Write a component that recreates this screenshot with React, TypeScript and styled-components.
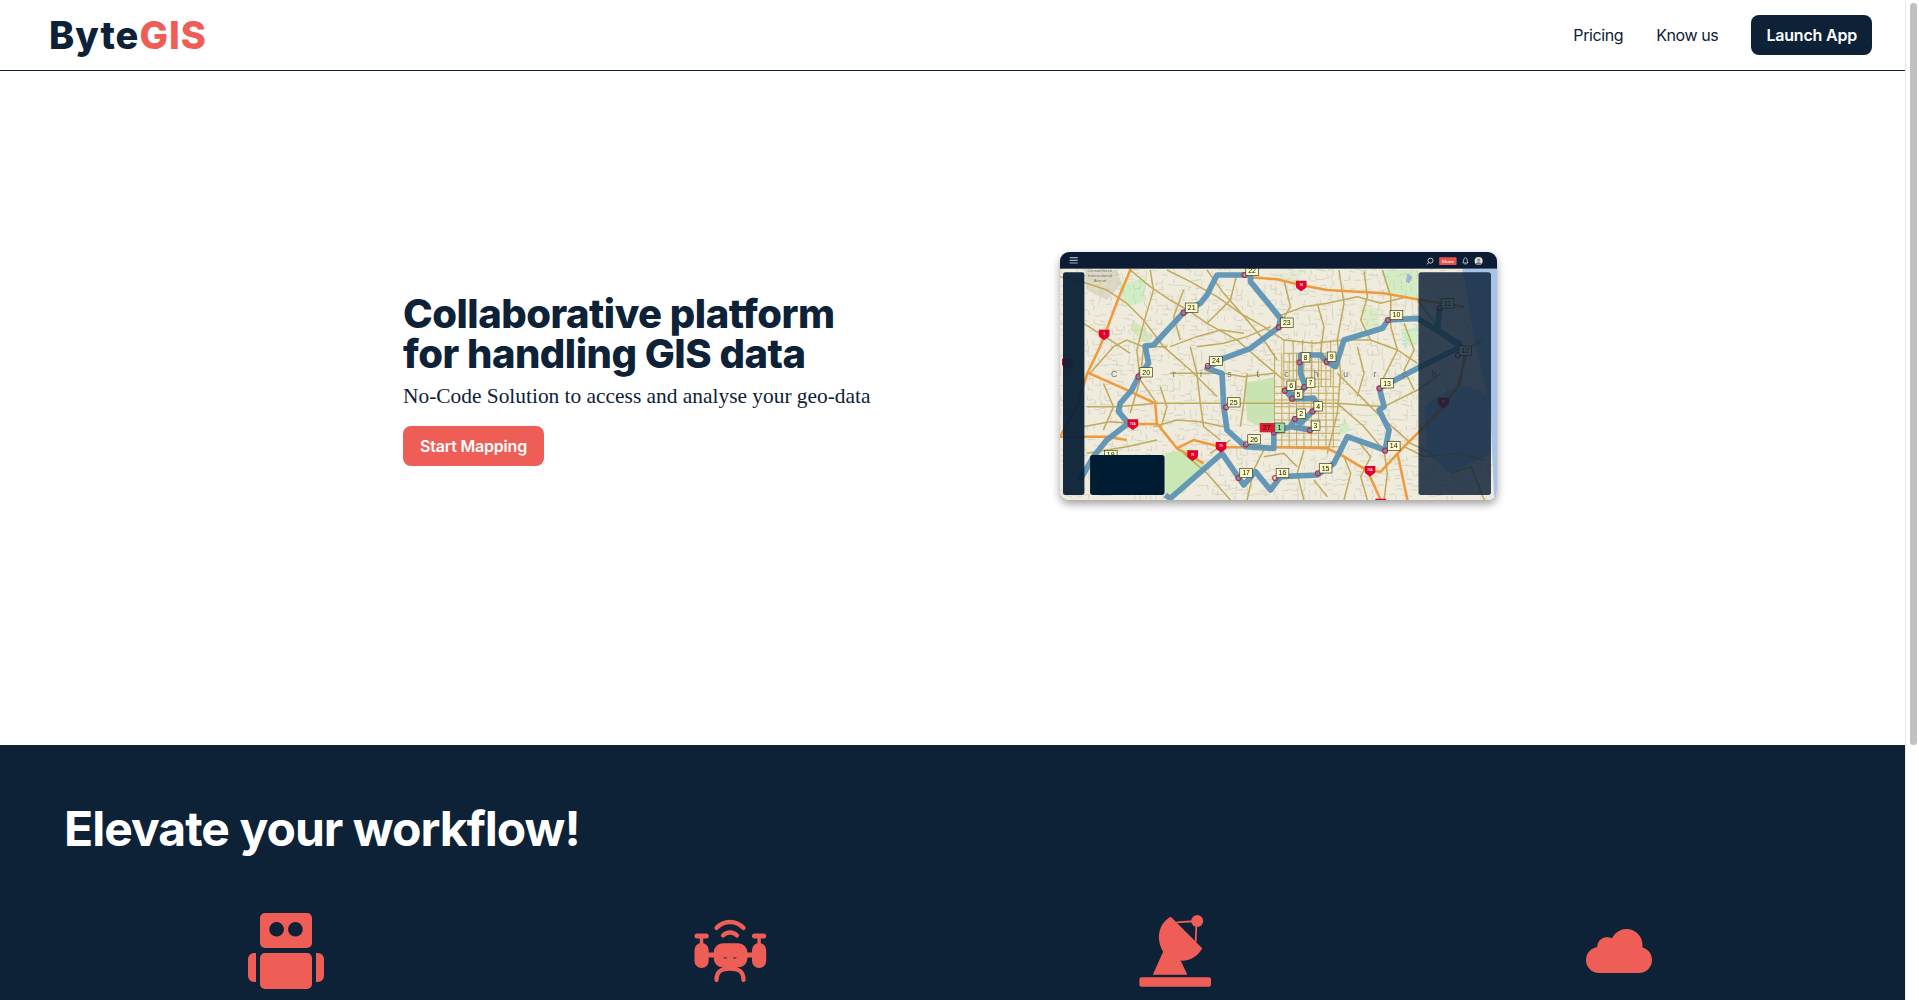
import React from "react";
import styled, { createGlobalStyle } from "styled-components";

const NAVY = "#0d2137";
const CORAL = "#ee5e57";
const SANS = `Inter, "Liberation Sans", Arial, sans-serif`;
const SERIF = `"Liberation Serif", "Times New Roman", serif`;

const Global = createGlobalStyle`
  body { margin: 0; background: #fff; font-family: ${SANS}; color: ${NAVY}; }
`;

const Frame = styled.div`display: flex; align-items: flex-start;`;
const Page = styled.main`flex: 1; min-width: 0;`;
const Rail = styled.aside`
  position: sticky; top: 0; flex: none; width: 14px; height: 100vh; box-sizing: border-box;
  padding: 3px 2px 0 4px; background: #fff; border-left: 1px solid #e8e8e8;
`;
const Thumb = styled.div`height: 742px; border-radius: 4px; background: #c1c1c1;`;
const Nav = styled.header`
  display: flex; align-items: center; justify-content: space-between;
  height: 70px; padding: 0 33px 0 50px; border-bottom: 1px solid ${NAVY}; box-sizing: content-box;
`;
const Logo = styled.div`
  font-size: 38px; font-weight: 800; letter-spacing: 1px; line-height: 70px; margin-left: -1px;
  span { color: ${CORAL}; }
`;
const NavLinks = styled.nav`display: flex; align-items: center; gap: 33px;`;
const NavLink = styled.a`font-size: 16px; font-weight: 400; color: ${NAVY}; letter-spacing: -0.4px; margin-top: -1px;`;
const Button = styled.button<{ $bg: string; $pad: number }>`
  height: 40px; border: 0; border-radius: 8px; padding: 0 ${p => p.$pad}px;
  background: ${p => p.$bg}; color: #fff; font-family: ${SANS}; font-size: 16px; font-weight: 600; letter-spacing: -0.2px;
`;
const Hero = styled.section`
  display: flex; align-items: center; justify-content: center; gap: 189px;
  height: 674px; padding: 0 5px 64px 0; box-sizing: border-box;
`;
const HeroText = styled.div`display: flex; flex-direction: column; align-items: flex-start; width: 468px; margin-top: 8px;`;
const Title = styled.h1`margin: 0; font-size: 40px; line-height: 40px; font-weight: 800; letter-spacing: -0.5px; white-space: nowrap;`;
const Sub = styled.p`margin: 8px 0 16px; font-family: ${SERIF}; font-size: 21.4px; line-height: 28px; white-space: nowrap;`;
const Shot = styled.div`
  width: 437px; height: 248px; border-radius: 9px; overflow: hidden; flex: none;
  box-shadow: 0 4px 9px rgba(0,0,0,.38);
  svg { display: block; width: 100%; height: 100%; }
`;
const Dark = styled.section`
  background: ${NAVY}; color: #fff; padding: 54px 64px 0; min-height: 602px; box-sizing: border-box;
`;
const DarkTitle = styled.h2`margin: 0 0 52px; font-size: 48px; line-height: 60px; font-weight: 700; letter-spacing: -0.97px;`;
const Features = styled.div`display: grid; grid-template-columns: repeat(4, 1fr);`;
const Feature = styled.div`display: flex; justify-content: center;`;
const Icon = styled.svg`width: 80px; height: 80px; fill: ${CORAL}; display: block;`;

const tan: string[] = [
  "240,90 300,140 360,180 420,215 470,250 560,300 640,370 700,420",
  "350,90 420,125 500,170 570,220 640,260 700,300",
  "30,110 110,130 170,150 230,190 280,240 340,320 420,390 500,470",
  "300,90 310,150 280,250 260,330 270,420 240,520",
  "470,90 520,160 590,240 640,300 680,360",
  "865,90 880,190 860,300 870,400 860,520 830,640",
  "995,90 1020,170 1020,260 1040,330 990,430",
  "800,190 820,260 810,340",
  "680,230 760,200 830,190 920,170 990,190 1070,170",
  "700,300 790,310 880,300 960,300 1040,330 1100,370",
  "440,320 520,310 590,290 660,260",
  "360,320 440,290 510,270 580,280",
  "120,400 190,320 230,300 280,320 350,320",
  "280,320 270,420 320,490",
  "110,500 200,500 320,490 460,490 580,490 670,490 860,490 1000,500",
  "100,560 180,545 240,550",
  "420,320 440,400 450,490 460,560 510,600",
  "590,400 580,490 570,560",
  "310,560 380,540 450,545 520,560",
  "860,400 980,520 1080,610 1140,640",
  "860,490 940,560 990,620",
  "1000,500 1100,450 1170,400",
  "670,400 580,410 520,400 440,400 360,400",
  "880,650 900,700 880,780",
  "640,630 610,690 590,780",
  "760,630 740,700 760,780",
  "1060,620 1120,650 1220,640 1300,660",
  "1000,630 1010,700 1000,780",
  "400,640 470,700 540,780",
  "1100,180 1160,260 1240,330 1230,430 1180,490 1120,560",
  "1240,330 1300,300",
  "100,250 180,300 240,340",
  "110,640 230,620 320,600",
  "1200,700 1260,680 1300,780",
  "400,150 370,230 390,300",
  "560,100 540,180 470,250",
  "700,120 720,200 690,250",
  "940,95 950,170 930,240 960,300",
  "1060,250 1090,330 1060,390 1090,450",
  "920,320 940,400 920,470",
  "330,440 350,500 330,570",
  "160,430 190,500 160,570",
  "640,650 700,640 740,680",
  "920,600 960,650 930,710 950,780",
  "790,720 830,770",
  "480,640 540,600",
];
const orange: string[] = [
  "242,86 205,175 150,320 112,400 80,500 30,590",
  "112,398 220,445 315,490 320,550 380,625 460,670",
  "240,552 320,552",
  "30,590 170,590 230,600",
  "380,625 430,600 515,622 680,622 830,625 880,650 950,692 990,695 1060,620 1160,520 1220,440 1250,330",
  "600,112 680,118 750,135 830,150 1000,160 1110,180 1240,200",
  "1040,640 1070,780",
  "950,692 990,780",
];

function streets(): string {
  let d = "";
  let s = 17;
  const r = () => ((s = (s * 9301 + 49297) % 233280) / 233280);
  for (let y = 90; y < 780; y += 15) {
    for (let x = 30; x < 1320; x += 17) {
      const inPark = x > 585 && x < 668 && y > 420 && y < 555;
      const green = x > 350 && x < 430 && y > 640;
      if (inPark || green || r() < 0.38) continue;
      const jx = r() * 7 - 3.5, jy = r() * 7 - 3.5, tilt = r() * 8 - 4;
      if (r() < 0.55) d += `M${x + jx} ${y + jy}l17 ${tilt}`;
      else d += `M${x + jx} ${y + jy}l${tilt} 15`;
    }
  }
  return d;
}
function cbd(): string {
  let d = "";
  for (let x = 672; x <= 868; x += 22) d += `M${x} 340V625`;
  for (let y = 440; y <= 620; y += 20) d += `M672 ${y}H868`;
  for (let x = 700; x <= 840; x += 28) d += `M${x} 300V440`;
  for (let y = 340; y <= 440; y += 26) d += `M700 ${y}H840`;
  return d;
}

const routes = [
  "582,105 500,105 470,165 450,190 400,218 310,315 285,318 295,370 265,410 245,450 210,490 205,515 235,550 170,600 130,650 90,720",
  "345,765 360,775 515,640 580,735 615,695 660,750 690,710 800,705 850,670 890,590 1003,630 1015,570 985,510 1000,500 986,445 1100,385 1230,320 1160,270 1165,205",
  "1230,315 1100,235 1012,240 995,265 880,300 855,380 828,365 810,345 750,345 750,400 765,440 735,470 705,450 725,476 790,475 805,500 786,514 750,550 733,537 720,560 780,570 720,560 670,575 670,625 585,620 530,570 520,500 515,400 470,385 520,355 600,325 685,262 690,235 600,125 600,105 582,105",
];
const markers: [string, number, number, number, number][] = [
  ["22", 582, 105, 605, 93], ["21", 400, 218, 424, 203], ["23", 685, 262, 709, 248], ["10", 1012, 240, 1037, 225],
  ["11", 1167, 205, 1190, 190], ["12", 1221, 346, 1243, 332], ["9", 828, 365, 843, 350], ["8", 747, 367, 765, 352],
  ["24", 473, 378, 497, 363], ["20", 265, 410, 288, 397], ["13", 986, 445, 1009, 430], ["7", 761, 441, 780, 428],
  ["6", 703, 452, 722, 437], ["5", 725, 476, 744, 463], ["25", 527, 502, 550, 487], ["4", 786, 514, 803, 499],
  ["2", 733, 537, 752, 521], ["3", 778, 571, 795, 557], ["26", 587, 613, 611, 598], ["14", 1003, 632, 1029, 618],
  ["15", 802, 700, 825, 685], ["16", 674, 714, 696, 699], ["17", 564, 714, 587, 699], ["19", 160, 660, 182, 645],
];
const shields: [string, number, number][] = [
  ["1", 162, 283], ["74", 752, 136], ["75", 52, 370], ["75A", 248, 552], ["73", 512, 620], ["75", 427, 645],
  ["75A", 958, 692], ["75", 1178, 487], ["", 990, 790],
];
const cityLetters: [string, number][] = [
  ["C", 192], ["r", 372], ["i", 452], ["s", 537], ["t", 622], ["c", 708], ["h", 797], ["u", 885], ["r", 973], ["c", 1060], ["h", 1150],
];

const MapShot = () => (
  <svg viewBox="30 36 1308 744" preserveAspectRatio="none">
    <defs>
      <filter id="soft" x="-2%" y="-2%" width="104%" height="104%"><feGaussianBlur stdDeviation="1.5" /></filter>
    </defs>
    <g filter="url(#soft)">
      <rect x="20" y="30" width="1330" height="760" fill="#efebdd" />
      <path d="M205 135L285 115 280 185 230 200Z" fill="#cfeec5" />
      <path d="M995 90H1100V175L1010 155Z" fill="#d3ecc4" />
      <path d="M1050 270L1100 260 1100 310 1060 325Z" fill="#cff0cd" />
      <path d="M925 200L985 205 985 265 945 270Z" fill="#dcebc8" />
      <path d="M690 100L760 90 740 130 700 125Z" fill="#e2ecd0" />
      <path d="M250 240L310 290 290 310 240 270Z" fill="#d6e5bb" />
      <path d="M880 530L900 570 860 590Z" fill="#d3ecc4" />
      <path d="M1070 100L1085 110 1075 130 1065 125Z" fill="#8fb4e4" />
      <path d="M105 90H200L215 130 170 180 110 150Z" fill="#dcd8c8" />
      <path d="M120 140L160 120M130 150L170 130" stroke="#ece5a0" strokeWidth="5" />
      <path d={streets()} fill="none" stroke="#c6c2ae" strokeWidth="1.6" />
      <polygon points="1235,86 1345,86 1345,790 1330,790 1320,560 1310,470 1270,300" fill="#a6c4ea" />
      <path d="M1120 500C1180 440 1260 420 1310 470L1320 640 1200 700 1130 640Z" fill="#a8c4e8" />
      <path d="M582 430L670 412 672 540 630 562 590 540Z" fill="#c9e3b2" />
      <path d="M345 640L425 625 460 680 400 760 345 760Z" fill="#c9e8b4" />
      <path d={cbd()} fill="none" stroke="#c4ab5c" strokeWidth="3" />
      {tan.map((p, i) => <polyline key={i} points={p} fill="none" stroke="#c2aa5c" strokeWidth="4.5" />)}
      {orange.map((p, i) => <polyline key={i} points={p} fill="none" stroke="#ee9a3c" strokeWidth="7.5" />)}
      {routes.map((p, i) => (
        <polyline key={i} points={p} fill="none" stroke="#5d94b4" strokeWidth="17" strokeLinejoin="round" opacity=".95" />
      ))}
      {shields.map(([t, x, y], i) => (
        <g key={i}>
          <path d={`M${x - 16} ${y - 14}H${x + 16}V${y + 2}C${x + 16} ${y + 10} ${x + 6} ${y + 12} ${x} ${y + 18}C${x - 6} ${y + 12} ${x - 16} ${y + 10} ${x - 16} ${y + 2}Z`} fill="#e4002b" />
          {t && <text x={x} y={y + 2} fontSize="9" fontWeight="700" fontFamily="Liberation Sans, sans-serif" fill="#fff" textAnchor="middle">{t}</text>}
        </g>
      ))}
      {cityLetters.map(([c, x], i) => (
        <text key={i} x={x} y="410" fontSize="26" fontFamily="Liberation Sans, sans-serif" fill="#6f6f6a" textAnchor="middle">{c}</text>
      ))}
      <text x="150" y="97" fontSize="13" fontFamily="Liberation Sans, sans-serif" fill="#77756c" textAnchor="middle">Christchurch</text>
      <text x="150" y="111" fontSize="13" fontFamily="Liberation Sans, sans-serif" fill="#77756c" textAnchor="middle">International</text>
      <text x="150" y="125" fontSize="13" fontFamily="Liberation Sans, sans-serif" fill="#77756c" textAnchor="middle">Airport</text>
      {markers.map(([t, mx, my, lx, ly], i) => {
        const w = t.length > 1 ? 38 : 26;
        return (
          <g key={i}>
            <circle cx={mx} cy={my} r="7.5" fill="none" stroke="#c8243c" strokeWidth="3.5" />
            <rect x={lx - w / 2} y={ly - 14} width={w} height="28" fill="#fdfcc4" stroke="#33332c" strokeWidth="2" />
            <text x={lx} y={ly + 7.5} fontSize="21" fontFamily="Liberation Sans, sans-serif" fill="#111" textAnchor="middle">{t}</text>
          </g>
        );
      })}
      <circle cx="670" cy="577" r="7.5" fill="none" stroke="#c8243c" strokeWidth="3.5" />
      <rect x="628" y="549" width="44" height="28" fill="#e01a35" />
      <text x="649" y="570" fontSize="21" fontFamily="Liberation Sans, sans-serif" fill="#111" textAnchor="middle">27</text>
      <rect x="673" y="549" width="30" height="28" fill="#9dd9a0" stroke="#33332c" strokeWidth="2" />
      <text x="687" y="570" fontSize="21" fontFamily="Liberation Sans, sans-serif" fill="#111" textAnchor="middle">1</text>
      <rect x="39" y="97" width="64" height="668" rx="7" fill="#0d2137" opacity=".96" />
      <rect x="1103" y="97" width="217" height="668" rx="8" fill="#0d2137" opacity=".84" />
      <rect x="120" y="645" width="223" height="120" rx="8" fill="#061d33" />
      <rect x="20" y="30" width="1330" height="56" fill="#0b1f34" />
      <path d="M59 53H83M59 61H83M59 69H83" stroke="#a4aeb8" strokeWidth="3.5" />
      <circle cx="1139" cy="62" r="7.5" fill="none" stroke="#dfe3e7" strokeWidth="2.5" />
      <path d="M1133 68L1129 73" stroke="#dfe3e7" strokeWidth="2.5" />
      <rect x="1165" y="52" width="52" height="23" rx="3" fill="#e8524a" />
      <text x="1191" y="68" fontSize="13" fontWeight="700" fontFamily="Liberation Sans, sans-serif" fill="#ffe9e6" textAnchor="middle">Share</text>
      <path d="M1236 69C1238 66 1237 54 1243.5 53C1250 54 1249 66 1251 69ZM1241 72H1246" fill="none" stroke="#dfe3e7" strokeWidth="2.2" />
      <circle cx="1283" cy="63" r="12" fill="#dce4e2" />
      <circle cx="1283" cy="60" r="5" fill="#b68a68" />
      <path d="M1274 71C1277 65 1289 65 1292 71L1283 75Z" fill="#57768a" />
    </g>
  </svg>
);

const RobotIcon = () => (
  <Icon viewBox="0 0 80 80">
    <path fillRule="evenodd" d="M19 2H61a5 5 0 0 1 5 5V32a5 5 0 0 1-5 5H19a5 5 0 0 1-5-5V7a5 5 0 0 1 5-5ZM30.6 11a7.3 7.3 0 1 0 .01 0ZM49.4 11a7.3 7.3 0 1 0 .01 0Z" />
    <rect x="14" y="42" width="52" height="36" rx="5" />
    <path d="M10 42V71H8a6 6 0 0 1-6-6V48a6 6 0 0 1 6-6ZM70 42V71h2a6 6 0 0 0 6-6V48a6 6 0 0 0-6-6Z" />
  </Icon>
);
const DroneIcon = () => (
  <Icon viewBox="0 0 80 80">
    <path d="M26.5 17C34 9 46 9 53.5 17M33 24.5C37 20.5 43 20.5 47 24.5M26.5 69C26.5 60 32 57.5 40 57.5C48 57.5 53.5 60 53.5 69" fill="none" stroke="#ee5e57" strokeWidth="4.3" strokeLinecap="round" />
    <rect x="4.5" y="22.5" width="14.2" height="5" rx="2.5" />
    <rect x="62" y="22.5" width="14.2" height="5" rx="2.5" />
    <rect x="9.8" y="24" width="3.4" height="12" />
    <rect x="67.4" y="24" width="3.4" height="12" />
    <rect x="4.5" y="32" width="14.2" height="25" rx="7" />
    <rect x="62" y="32" width="14.2" height="25" rx="7" />
    <rect x="17" y="41.5" width="46" height="5" />
    <path fillRule="evenodd" d="M32.7 32.3H48.4a9 9 0 0 1 9 9V47.3a9 9 0 0 1-9 9H32.7a9 9 0 0 1-9-9V41.3a9 9 0 0 1 9-9ZM35.2 42a2.5 2.8 0 1 0 .01 0ZM44.7 42a2.5 2.8 0 1 0 .01 0Z" />
  </Icon>
);
const DishIcon = () => (
  <Icon viewBox="0 0 80 80">
    <rect x="4.4" y="66.3" width="71.6" height="9.4" rx="2" />
    <path d="M17.8 63.7L28.1 40.7 40 44 45.4 49 52.3 63.7Z" />
    <path d="M35.8 5.7C25 11 19.5 26 28.1 40.7C35 46.5 41 49.7 47.3 49.7C56 49.7 63 45 67.2 37.3Z" />
    <circle cx="62.2" cy="10" r="6" />
    <path d="M41.5 11.3L62 10M61.4 12.3L60.7 30.7" stroke="#ee5e57" strokeWidth="1.8" fill="none" />
  </Icon>
);
const CloudIcon = () => (
  <Icon viewBox="0 0 80 80">
    <circle cx="20" cy="49" r="13" />
    <circle cx="60" cy="49" r="13" />
    <circle cx="28" cy="36" r="10" />
    <circle cx="47.5" cy="34" r="16" />
    <rect x="20" y="38" width="40" height="24" />
  </Icon>
);

export default function App() {
  return (
    <Frame>
      <Global />
      <Page>
        <Nav>
          <Logo>Byte<span>GIS</span></Logo>
          <NavLinks>
            <NavLink>Pricing</NavLink>
            <NavLink>Know us</NavLink>
            <Button $bg={NAVY} $pad={15}>Launch App</Button>
          </NavLinks>
        </Nav>
        <Hero>
          <HeroText>
            <Title>Collaborative platform<br />for handling GIS data</Title>
            <Sub>No-Code Solution to access and analyse your geo-data</Sub>
            <Button $bg={CORAL} $pad={17}>Start Mapping</Button>
          </HeroText>
          <Shot><MapShot /></Shot>
        </Hero>
        <Dark>
          <DarkTitle>Elevate your workflow!</DarkTitle>
          <Features>
            <Feature><RobotIcon /></Feature>
            <Feature><DroneIcon /></Feature>
            <Feature><DishIcon /></Feature>
            <Feature><CloudIcon /></Feature>
          </Features>
        </Dark>
      </Page>
      <Rail><Thumb /></Rail>
    </Frame>
  );
}
